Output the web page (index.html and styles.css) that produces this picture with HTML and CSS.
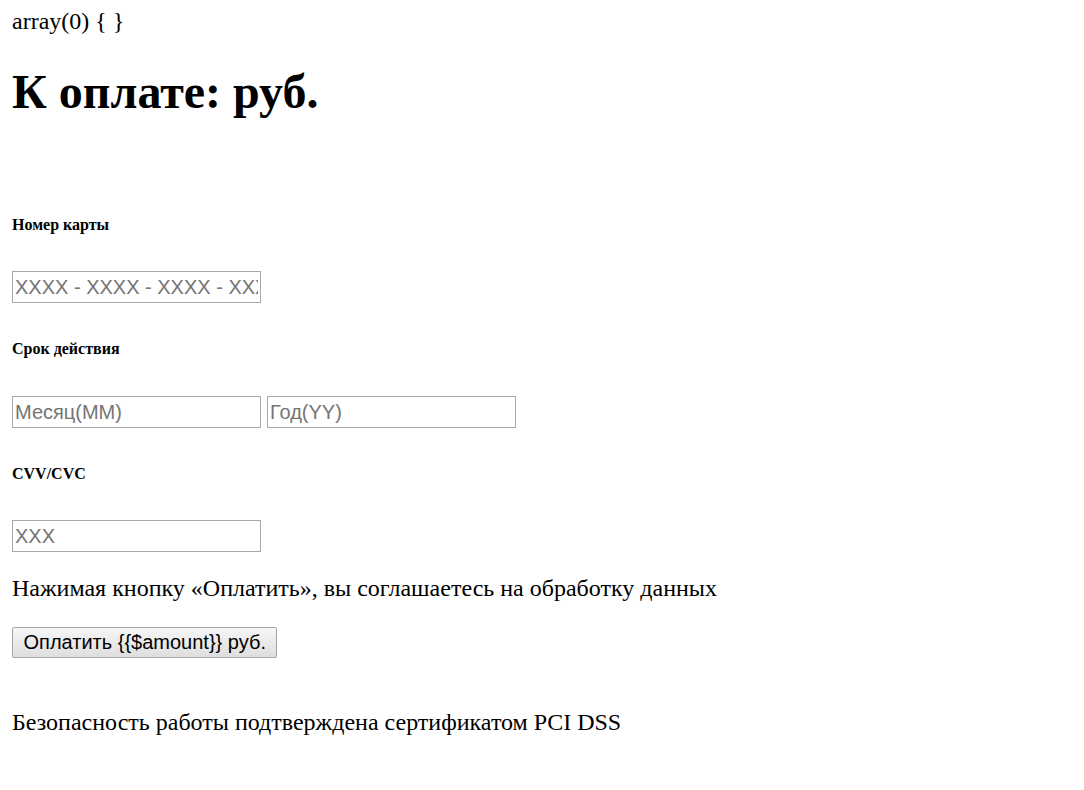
FILE: index.html
```html
<!DOCTYPE html>
<html lang="ru">
<head>
    <meta charset="UTF-8">
    <meta name="viewport" content="width=device-width, initial-scale=1.0">
    <title>Оплата</title>
    <link rel="stylesheet" href="styles.css">
</head>
<body>
    <div class="dump">array(0) { }</div>

    <h1>К оплате: руб.</h1>

    <form class="pay-form" onsubmit="return false;">
        <h6 class="field-label">Номер карты</h6>
        <input class="field" type="text" placeholder="XXXX - XXXX - XXXX - XXXX">

        <h6 class="field-label">Срок действия</h6>
        <div class="field-row">
            <input class="field" type="text" placeholder="Месяц(MM)">
            <input class="field" type="text" placeholder="Год(YY)">
        </div>

        <h6 class="field-label">CVV/CVC</h6>
        <input class="field" type="text" placeholder="XXX">

        <p class="agree">Нажимая кнопку «Оплатить», вы соглашаетесь на обработку данных</p>

        <button class="pay-btn" type="submit">Оплатить {{$amount}} руб.</button>
    </form>

    <p class="secure">Безопасность работы подтверждена сертификатом PCI DSS</p>
</body>
</html>
```

FILE: styles.css
```css
body {
    margin: 8px 12px;
    font-family: "Liberation Serif", "Times New Roman", serif;
    font-size: 24px;
    color: #000;
    background: #fff;
}

.dump {
    line-height: 27px;
}

h1 {
    font-size: 48px;
    font-weight: bold;
    margin: 30px 0 0;
    line-height: 53px;
}

.pay-form {
    display: flex;
    flex-direction: column;
    align-items: flex-start;
}

.field-label {
    font-size: 16px;
    font-weight: bold;
    line-height: 18px;
    margin: 37px 0 0;
}

.pay-form .field-label:first-child {
    margin-top: 98px;
}

.field {
    box-sizing: border-box;
    width: 249px;
    height: 32px;
    margin: 37px 0 0;
    padding: 1px 2px;
    border: 1px solid #a9a9a9;
    border-radius: 0;
    font-family: "Liberation Sans", Arial, sans-serif;
    font-size: 20px;
    color: #000;
    background: #fff;
    outline: none;
}

.field::placeholder {
    color: #757575;
}

.field-row {
    display: flex;
    gap: 6px;
    margin-top: 38px;
}

.field-row .field {
    margin: 0;
}

.agree {
    line-height: 27px;
    margin: 23px 0 0;
}

.pay-btn {
    box-sizing: border-box;
    height: 31px;
    margin-top: 25px;
    padding: 0 10.5px;
    border: 1px solid #a6a6a6;
    border-radius: 2px;
    background: linear-gradient(#f6f6f6, #dedede);
    font-family: "Liberation Sans", Arial, sans-serif;
    font-size: 20px;
    color: #000;
    cursor: pointer;
}

.secure {
    line-height: 27px;
    margin: 51px 0 0;
}
```
